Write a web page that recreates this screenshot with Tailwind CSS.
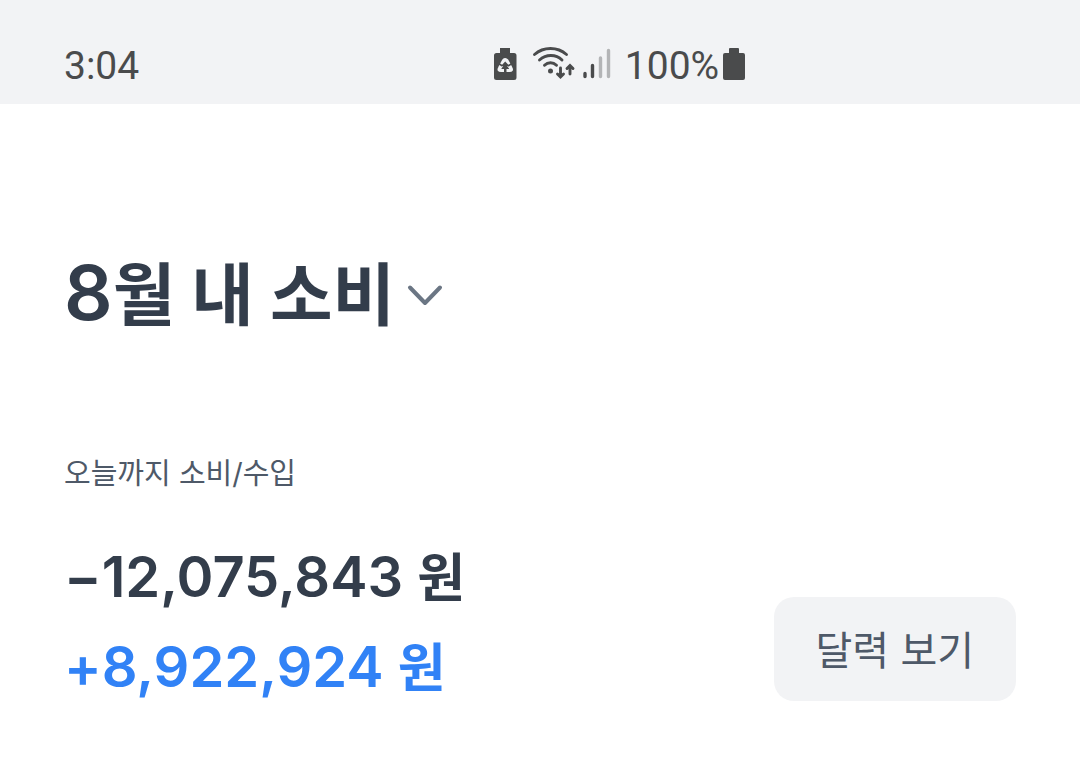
<!DOCTYPE html>
<html lang="ko">
  <head>
    <meta charset="UTF-8" />
    <meta name="viewport" content="width=device-width, initial-scale=1.0" />
    <title>8월 내 소비</title>
    <script src="https://cdn.jsdelivr.net/npm/@tailwindcss/browser@4"></script>
  </head>

  <body class="min-h-screen bg-white font-['Inter','Noto_Sans_CJK_KR',sans-serif] text-[#333d4b]">
    <!-- Status bar -->
    <header class="flex h-[104px] items-center bg-[#f2f3f5] px-16 pt-7 font-['Roboto',sans-serif] text-[39px] leading-[48px] text-[#4a4b4c]">
      <time class="w-2/5 shrink-0">3:04</time>
      <div class="ml-12 flex items-center">
        <svg class="mr-4 mb-1 h-8 w-6" viewBox="0 0 24 32" fill="none">
          <path d="M7 0h10v5h4a2.500 2.500 0 0 1 2.500 2.500v22a2.500 2.500 0 0 1-2.500 2.500H3.500a2.500 2.500 0 0 1-2.500-2.500v-22A2.500 2.500 0 0 1 3.500 5H7z" fill="currentColor" />
          <path d="M10.500 12.500L6.500 20Q5 22.500 8 22.500h8.500Q19.500 22.500 18 20l-4-7.500Q12.300 10.500 10.500 12.500z" fill="#f2f3f5" stroke="#f2f3f5" stroke-width="3" stroke-linejoin="round" />
          <path d="M12.200 13.500l4.300 4.500h-2.300l2 3h-2.700v4.500h-2.500V21H8.200l2-3H8z" fill="currentColor" />
          <path d="M5.500 15.500l4 2.500M19 15.500l-4 2.500" stroke="currentColor" stroke-width="1.500" />
        </svg>
        <svg class="mr-2 mb-1 h-8 w-[42px] overflow-visible" viewBox="0 0 42 32" fill="none" stroke="currentColor" stroke-width="2.900" stroke-linecap="round">
          <path d="M1.500 6.500c9-8 23-8 32 0M6.500 12c6.500-6 16.500-6 22.500 0M11.500 17.300c3.500-3.500 8.500-3.500 12 0" />
          <circle cx="17.500" cy="23" r="2.500" fill="currentColor" stroke="none" />
          <path d="M27.500 20v8M24.500 26l3 3 3-3M37 26v-8M34 20.500l3-3 3 3" />
        </svg>
        <svg class="mr-3.5 mb-1 h-8 w-7" viewBox="0 0 28 32" stroke="currentColor" stroke-width="3.400" stroke-linecap="round">
          <path d="M2 25.500v3M9.500 17.500v11" />
          <path d="M17.500 10v18.500M25.500 2.500v26" stroke="#b3b4b6" />
        </svg>
        <span>100%</span>
        <svg class="ml-1 mb-1 h-8 w-[22px]" viewBox="0 0 22 32" fill="currentColor">
          <path d="M6 1a1 1 0 0 1 1-1h8a1 1 0 0 1 1 1v4h4a2 2 0 0 1 2 2v23a2 2 0 0 1-2 2H2a2 2 0 0 1-2-2V7a2 2 0 0 1 2-2h4z" />
        </svg>
      </div>
    </header>

    <main class="px-16 pt-[140px]">
      <h1>
        <button type="button" class="flex items-center gap-3 text-[68px] leading-[96px] font-bold">
          <span><span class="text-[76px] font-semibold">8</span>월 내 소비</span>
          <svg class="h-6 w-9" viewBox="0 0 36 24" fill="none" stroke="#6b7684" stroke-width="4" stroke-linecap="round" stroke-linejoin="round">
            <path d="M3 5.500l15 15.500L33 5.500" />
          </svg>
        </button>
      </h1>

      <!-- Monthly totals -->
      <section class="mt-[107px]">
        <h2 class="text-[29px] leading-[48px] text-[#4e5968]">오늘까지 소비/수입</h2>
        <div class="mt-[35px] flex items-end justify-between">
          <div class="text-[56px] leading-[88px] font-semibold">
            <p>−12,075,843 <span class="text-[52px]">원</span></p>
            <p class="text-[#3182f6]">+8,922,924 <span class="text-[52px]">원</span></p>
          </div>
          <button type="button" class="mb-3 rounded-[20px] bg-[#f2f3f5] px-[42px] pt-[26px] pb-[22px] text-[40px] leading-[56px] text-[#4e5968]">달력 보기</button>
        </div>
      </section>
    </main>
  </body>
</html>
